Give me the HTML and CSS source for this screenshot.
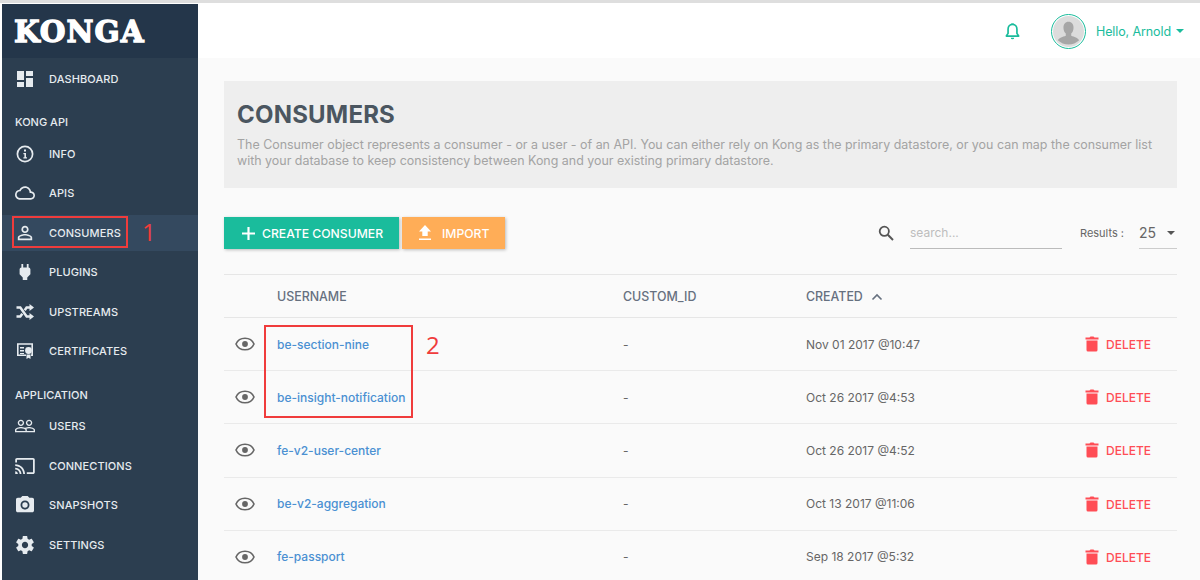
FILE: index.html
```html
<!DOCTYPE html>
<html lang="en">
<head>
<meta charset="utf-8">
<title>Konga - Consumers</title>
<link rel="stylesheet" href="styles.css">
</head>
<body>
<div class="app">
  <aside class="sidebar">
    <div class="brand">KONGA</div>
    <nav class="nav">
      <a class="item first"><svg class="ico" viewBox="0 0 18 18"><path d="M1 1h7v9H1zM10 1h7v5h-7zM10 8h7v9h-7zM1 12h7v5H1z" fill="currentColor"/></svg><span>DASHBOARD</span></a>
      <div class="group">KONG API</div>
      <a class="item"><svg class="ico" viewBox="0 0 18 18"><circle cx="9" cy="9" r="7.6" fill="none" stroke="currentColor" stroke-width="1.7"/><path d="M8 4.500h2v2H8zM7.400 8h2.600v4.200h1v1.300H7.400v-1.300h1V9.300h-1z" fill="currentColor"/></svg><span>INFO</span></a>
      <a class="item"><svg class="ico wide" viewBox="0 3 24 18"><path fill="currentColor" d="M19.350 10.040C18.670 6.590 15.640 4 12 4 9.110 4 6.600 5.640 5.350 8.040 2.340 8.360 0 10.910 0 14c0 3.310 2.690 6 6 6h13c2.760 0 5-2.240 5-5 0-2.640-2.050-4.780-4.650-4.960zM19 18H6c-2.210 0-4-1.790-4-4s1.790-4 4-4h.71C7.370 7.690 9.480 6 12 6c3.040 0 5.500 2.460 5.500 5.500v.5H19c1.660 0 3 1.340 3 3s-1.340 3-3 3z"/></svg><span>APIS</span></a>
      <a class="item active"><svg class="ico" viewBox="2 2 20 20"><path fill="currentColor" d="M12 5.900c1.160 0 2.100.94 2.100 2.100s-.94 2.100-2.100 2.100S9.900 9.160 9.900 8s.94-2.100 2.100-2.100m0 9c2.970 0 6.100 1.460 6.100 2.100v1.100H5.900V17c0-.64 3.130-2.100 6.100-2.100M12 4C9.790 4 8 5.790 8 8s1.790 4 4 4 4-1.790 4-4-1.790-4-4-4zm0 9c-2.670 0-8 1.340-8 4v3h16v-3c0-2.660-5.330-4-8-4z"/></svg><span>CONSUMERS</span></a>
      <a class="item"><svg class="ico" viewBox="3 2 18 20"><path fill="currentColor" d="M16.010 7L16 3h-2v4h-4V3H8v4h-.01C7 6.990 6 7.990 6 8.990v5.490L9.500 18v3h5v-3l3.500-3.510v-5.500c0-1-1-2-1.990-1.990z"/></svg><span>PLUGINS</span></a>
      <a class="item"><svg class="ico" viewBox="0 0 18 18"><path d="M.5 4.500h3.800l6.400 9H14M.5 13.500h3.800l2-2.800M8.700 7.300l1.900-2.800H14" fill="none" stroke="currentColor" stroke-width="2.500"/><path d="M13.500 1L18 4.500 13.500 8zM13.500 10L18 13.500 13.500 17z" fill="currentColor"/></svg><span>UPSTREAMS</span></a>
      <a class="item"><svg class="ico" viewBox="0 0 18 18"><path d="M10 13.200H1.800V2h14.400v11.200H15" fill="none" stroke="currentColor" stroke-width="1.600"/><path d="M4 5h4v1.500H4zM4 8h4v1.500H4zM4 11h4v1H4zM10.500 12.500h4V17l-2-1.200-2 1.200z" fill="currentColor"/><circle cx="12.500" cy="8.500" r="3.400" fill="currentColor"/></svg><span>CERTIFICATES</span></a>
      <div class="group">APPLICATION</div>
      <a class="item"><svg class="ico wide" viewBox="1 4 22 16"><path fill="currentColor" d="M16.500 13c-1.200 0-3.070.34-4.500 1-1.430-.67-3.300-1-4.500-1C5.330 13 1 14.080 1 16.250V19h22v-2.750c0-2.170-4.330-3.250-6.500-3.250zm-4 4.500h-10v-1.250c0-.54 2.560-1.750 5-1.750s5 1.210 5 1.750v1.250zm9 0H14v-1.250c0-.46-.2-.86-.52-1.220.88-.3 1.960-.53 3.020-.53 2.440 0 5 1.210 5 1.750v1.250zM7.500 12c1.930 0 3.500-1.570 3.500-3.500S9.430 5 7.500 5 4 6.570 4 8.500 5.570 12 7.500 12zm0-5.500c1.100 0 2 .9 2 2s-.9 2-2 2-2-.9-2-2 .9-2 2-2zm9 5.500c1.930 0 3.500-1.570 3.500-3.500S18.430 5 16.500 5 13 6.570 13 8.500s1.570 3.500 3.500 3.500zm0-5.500c1.100 0 2 .9 2 2s-.9 2-2 2-2-.9-2-2 .9-2 2-2z"/></svg><span>USERS</span></a>
      <a class="item"><svg class="ico wide" viewBox="1 3 22 18"><path fill="currentColor" d="M21 3H3c-1.100 0-2 .9-2 2v3h2V5h18v14h-7v2h7c1.100 0 2-.9 2-2V5c0-1.100-.9-2-2-2zM1 18v3h3c0-1.660-1.340-3-3-3zm0-4v2c2.760 0 5 2.240 5 5h2c0-3.870-3.130-7-7-7zm0-4v2c4.970 0 9 4.030 9 9h2c0-6.080-4.930-11-11-11z"/></svg><span>CONNECTIONS</span></a>
      <a class="item"><svg class="ico" viewBox="2 2 20 20"><path fill="currentColor" d="M9 2L7.170 4H4c-1.100 0-2 .9-2 2v12c0 1.100.9 2 2 2h16c1.100 0 2-.9 2-2V6c0-1.100-.9-2-2-2h-3.170L15 2H9zm3 15c-2.760 0-5-2.240-5-5s2.240-5 5-5 5 2.240 5 5-2.240 5-5 5z"/><circle cx="12" cy="12" r="3" fill="currentColor"/></svg><span>SNAPSHOTS</span></a>
      <a class="item"><svg class="ico" viewBox="2 2 20 20"><path fill="currentColor" d="M19.430 12.980c.04-.32.07-.64.07-.98s-.03-.66-.07-.98l2.110-1.650c.19-.15.24-.42.120-.64l-2-3.460c-.12-.22-.39-.3-.61-.22l-2.490 1c-.52-.4-1.080-.73-1.690-.98l-.38-2.650C14.460 2.180 14.250 2 14 2h-4c-.25 0-.46.18-.49.420l-.38 2.650c-.61.25-1.170.59-1.690.98l-2.490-1c-.23-.09-.49 0-.61.22l-2 3.460c-.13.22-.07.49.12.64l2.110 1.650c-.04.32-.07.65-.07.98s.03.66.07.98l-2.110 1.650c-.19.15-.24.42-.12.640l2 3.460c.12.22.39.3.61.22l2.490-1c.52.4 1.080.73 1.690.98l.38 2.650c.03.24.24.42.49.42h4c.25 0 .46-.18.49-.42l.38-2.650c.61-.25 1.170-.59 1.690-.98l2.490 1c.23.09.49 0 .61-.22l2-3.460c.12-.22.07-.49-.12-.64l-2.110-1.650zM12 15.500c-1.930 0-3.500-1.570-3.500-3.500s1.570-3.500 3.500-3.500 3.500 1.570 3.500 3.500-1.570 3.500-3.500 3.500z"/></svg><span>SETTINGS</span></a>
    </nav>
  </aside>
  <div class="main">
    <header class="topbar">
      <svg class="bell" viewBox="0 0 18 20"><path d="M9 2.500c-3 0-4.700 2.200-4.700 5.200v4.300L2.500 14.800h13L13.700 12V7.700C13.700 4.700 12 2.500 9 2.500z" fill="none" stroke="currentColor" stroke-width="1.800" stroke-linejoin="round"/><path d="M7.500 1.500h3v1.500h-3zM7.200 16.500h3.600a1.800 1.800 0 0 1-3.600 0z" fill="currentColor"/></svg>
      <div class="avatar"><svg viewBox="0 0 32 32"><circle cx="16" cy="16" r="16" fill="#dcdcdc"/><path d="M16 6c3.400 0 5.200 2.600 5.200 6 0 2.600-1 4.800-2.400 6v2.300c3 1.100 7 2.300 8.200 4.700a16 16 0 0 1-22 0c1.200-2.400 5.200-3.600 8.200-4.700V18c-1.400-1.200-2.400-3.400-2.400-6 0-3.400 1.800-6 5.200-6z" fill="#a6a6a6"/></svg></div>
      <span class="hello">Hello, Arnold</span><i class="caret green"></i>
    </header>
    <main class="content">
      <section class="intro">
        <h1>CONSUMERS</h1>
        <p>The Consumer object represents a consumer - or a user - of an API. You can either rely on Kong as the primary datastore, or you can map the consumer list with your database to keep consistency between Kong and your existing primary datastore.</p>
      </section>
      <div class="toolbar">
        <button class="btn teal"><svg class="plus" viewBox="0 0 12 12"><path d="M5 0h2v5h5v2H7v5H5V7H0V5h5z" fill="currentColor"/></svg>CREATE CONSUMER</button>
        <button class="btn orange"><svg class="up" viewBox="0 0 14 16"><path d="M7 0l6 6.500H9.700V11H4.300V6.500H1zM1 13.500h12V15H1z" fill="currentColor"/></svg>IMPORT</button>
        <div class="spacer"></div>
        <svg class="search" viewBox="0 0 16 16"><circle cx="6.300" cy="6.300" r="4.600" fill="none" stroke="currentColor" stroke-width="1.800"/><path d="M9.800 9.800L15 15" stroke="currentColor" stroke-width="2"/></svg>
        <div class="searchbox">search...</div>
        <span class="results">Results :</span>
        <div class="select"><span>25</span><i class="caret grey"></i></div>
      </div>
      <table class="grid">
        <thead><tr><th class="c-eye"></th><th class="c-user">USERNAME</th><th class="c-id">CUSTOM_ID</th><th class="c-date">CREATED <svg class="chev" viewBox="0 0 12 8"><path d="M1.500 6.500L6 2l4.500 4.500" fill="none" stroke="currentColor" stroke-width="1.600"/></svg></th><th></th></tr></thead>
        <tbody>
          <tr><td class="eye"><svg viewBox="0 0 20 14"><path d="M10 1.200C5.800 1.200 2.400 3.700 1 7c1.400 3.300 4.800 5.800 9 5.800s7.600-2.500 9-5.800c-1.400-3.300-4.800-5.800-9-5.800z" fill="none" stroke="currentColor" stroke-width="1.600"/><circle cx="10" cy="7" r="2.900" fill="currentColor"/></svg></td><td><a>be-section-nine</a></td><td>-</td><td>Nov 01 2017 @10:47</td><td class="del"><svg viewBox="0 0 14 16"><path d="M4.500 1.500L5.500.5h3l1 1H13.500v2H.5v-2zM1.500 4.500h11V14a1.500 1.500 0 0 1-1.500 1.500H3A1.500 1.500 0 0 1 1.500 14z" fill="currentColor"/></svg>DELETE</td></tr>
          <tr><td class="eye"><svg viewBox="0 0 20 14"><path d="M10 1.200C5.800 1.200 2.400 3.700 1 7c1.400 3.300 4.800 5.800 9 5.800s7.600-2.500 9-5.800c-1.400-3.300-4.800-5.800-9-5.800z" fill="none" stroke="currentColor" stroke-width="1.600"/><circle cx="10" cy="7" r="2.900" fill="currentColor"/></svg></td><td><a>be-insight-notification</a></td><td>-</td><td>Oct 26 2017 @4:53</td><td class="del"><svg viewBox="0 0 14 16"><path d="M4.500 1.500L5.500.5h3l1 1H13.500v2H.5v-2zM1.500 4.500h11V14a1.500 1.500 0 0 1-1.500 1.500H3A1.500 1.500 0 0 1 1.500 14z" fill="currentColor"/></svg>DELETE</td></tr>
          <tr><td class="eye"><svg viewBox="0 0 20 14"><path d="M10 1.200C5.800 1.200 2.400 3.700 1 7c1.400 3.300 4.800 5.800 9 5.800s7.600-2.500 9-5.800c-1.400-3.300-4.800-5.800-9-5.800z" fill="none" stroke="currentColor" stroke-width="1.600"/><circle cx="10" cy="7" r="2.900" fill="currentColor"/></svg></td><td><a>fe-v2-user-center</a></td><td>-</td><td>Oct 26 2017 @4:52</td><td class="del"><svg viewBox="0 0 14 16"><path d="M4.500 1.500L5.500.5h3l1 1H13.500v2H.5v-2zM1.500 4.500h11V14a1.500 1.500 0 0 1-1.500 1.500H3A1.500 1.500 0 0 1 1.500 14z" fill="currentColor"/></svg>DELETE</td></tr>
          <tr><td class="eye"><svg viewBox="0 0 20 14"><path d="M10 1.200C5.800 1.200 2.400 3.700 1 7c1.400 3.300 4.800 5.800 9 5.800s7.600-2.500 9-5.800c-1.400-3.300-4.800-5.800-9-5.800z" fill="none" stroke="currentColor" stroke-width="1.600"/><circle cx="10" cy="7" r="2.900" fill="currentColor"/></svg></td><td><a>be-v2-aggregation</a></td><td>-</td><td>Oct 13 2017 @11:06</td><td class="del"><svg viewBox="0 0 14 16"><path d="M4.500 1.500L5.500.5h3l1 1H13.500v2H.5v-2zM1.500 4.500h11V14a1.500 1.500 0 0 1-1.500 1.500H3A1.500 1.500 0 0 1 1.500 14z" fill="currentColor"/></svg>DELETE</td></tr>
          <tr><td class="eye"><svg viewBox="0 0 20 14"><path d="M10 1.200C5.800 1.200 2.400 3.700 1 7c1.400 3.300 4.800 5.800 9 5.800s7.600-2.500 9-5.800c-1.400-3.300-4.800-5.800-9-5.800z" fill="none" stroke="currentColor" stroke-width="1.600"/><circle cx="10" cy="7" r="2.900" fill="currentColor"/></svg></td><td><a>fe-passport</a></td><td>-</td><td>Sep 18 2017 @5:32</td><td class="del"><svg viewBox="0 0 14 16"><path d="M4.500 1.500L5.500.5h3l1 1H13.500v2H.5v-2zM1.500 4.500h11V14a1.500 1.500 0 0 1-1.500 1.500H3A1.500 1.500 0 0 1 1.500 14z" fill="currentColor"/></svg>DELETE</td></tr>
        </tbody>
      </table>
    </main>
  </div>
</div>
<div class="mark box-one"></div>
<div class="num num-one">1</div>
<div class="mark box-two"></div>
<div class="num num-two">2</div>
</body>
</html>
```
FILE: styles.css
```css
* { box-sizing: border-box; }
html, body { margin: 0; height: 580px; overflow: hidden; }
body { position: relative; background: #fafafa; font-family: Inter, "Liberation Sans", sans-serif; color: #555; }
.app { display: flex; height: 580px; border-top: 3px solid #dedede; padding-top: 1px; background: #fff; }
.sidebar { width: 196px; flex: none; margin-left: 2px; background: #2c3e50; color: #e6ebef; }
.brand { height: 54px; background: #24364a; color: #fff; font-family: "DejaVu Serif", serif; font-weight: 700; font-size: 29.500px; line-height: 56px; padding-left: 12px; -webkit-text-stroke: 1.300px #fff; letter-spacing: 1px; }
.nav { display: flex; flex-direction: column; }
.item { display: flex; align-items: center; height: 39.400px; padding-left: 14px; font-size: 11px; font-weight: 500; letter-spacing: .1px; }
.item.first { margin-top: 1px; }
.item span { margin-left: 15px; }
.item.active { background: #34495f; height: 36px; margin: 2px 0 1.400px; }
.ico { width: 18px; height: 18px; flex: none; }
.ico.wide { width: 20px; height: 16px; margin: 0 -1px; }
.group { height: 33px; padding-left: 13px; padding-top: 12px; font-size: 11px; font-weight: 500; margin-top: 6px; line-height: 13px; margin-bottom: -3px; }
.main { flex: 1; display: flex; flex-direction: column; min-width: 0; background: #fafafa; }
.topbar { height: 54px; flex: none; background: #fff; display: flex; align-items: center; justify-content: flex-end; padding-right: 16px; color: #1abc9c; }
.bell { width: 17px; height: 19px; margin-right: 30px; }
.avatar { width: 35px; height: 35px; border: 1px solid #1abc9c; border-radius: 50%; padding: 1px; margin-right: 10px; }
.avatar svg { display: block; width: 100%; height: 100%; }
.hello { font-size: 12.500px; letter-spacing: -.1px; }
.caret { display: block; width: 0; height: 0; border: 4px solid transparent; border-bottom-width: 0; margin-left: 5px; }
.caret.green { border-top-color: #1abc9c; }
.caret.grey { border-top-color: #555; }
.content { padding: 23px 23px 0 26px; }
.intro { height: 107px; background: #eeeeee; padding: 19px 13px 0; }
.intro h1 { margin: 0; font-size: 24px; line-height: 30px; font-weight: 700; color: #4b5660; letter-spacing: .2px; }
.intro p { margin: 7px 0 0; font-size: 12.450px; line-height: 16px; color: #a3a3a3; }
.toolbar { display: flex; align-items: center; height: 32px; margin-top: 29px; }
.btn { display: flex; align-items: center; height: 32px; border: 0; font-family: inherit; font-size: 12.200px; font-weight: 500; color: #fff; box-shadow: 1px 1px 3px rgba(0,0,0,.25); padding: 0; }
.teal { width: 175px; background: #1abc9c; padding-left: 18px; margin-right: 3px; }
.plus { width: 13px; height: 13px; margin-right: 7px; }
.orange { width: 103px; background: #ffad57; padding-left: 16px; }
.up { width: 14px; height: 16px; margin-right: 10px; }
.spacer { flex: 1; }
.search { width: 16px; height: 16px; color: #555; margin-right: 16px; }
.searchbox { width: 152px; height: 32px; line-height: 31px; border-bottom: 1px solid #bbb; font-size: 12px; color: #bdbdbd; margin-right: 18px; }
.results { font-size: 11px; color: #666; margin-right: 15px; }
.select { width: 38px; height: 32px; display: flex; align-items: center; justify-content: space-between; border-bottom: 1px solid #ccc; font-size: 14px; color: #666; padding-right: 1px; }
.select .caret { margin-right: 1px; }
.grid { width: 100%; margin-top: 25px; border-collapse: collapse; table-layout: fixed; border-top: 1px solid #e6e6e6; }
.grid th { height: 43px; text-align: left; font-size: 12.400px; font-weight: 500; color: #66707f; border-bottom: 1px solid #e6e6e6; padding: 0; }
.grid td { height: 53.200px; font-size: 12px; color: #666; border-bottom: 1px solid #eaeaea; padding: 0; }
.c-eye { width: 53px; }
.c-user { width: 346px; }
.c-id { width: 183px; }
.c-date { width: 279px; }
.chev { width: 12px; height: 8px; margin-left: 5px; }
.grid a { color: #4a90d2; font-weight: 500; }
.eye { color: #555; padding-left: 11px !important; }
.eye svg { display: block; width: 20px; height: 14px; }
.grid td.del { color: #ff4d55; font-weight: 500; white-space: nowrap; }
.del svg { width: 14px; height: 16px; vertical-align: -3px; margin-right: 7px; }
.mark { position: absolute; border: 2px solid #f03c3c; }
.box-one { left: 12px; top: 216px; width: 116px; height: 32px; }
.box-two { left: 264px; top: 325px; width: 149px; height: 93px; }
.num { position: absolute; color: #f03c3c; font-size: 24px; line-height: 28px; font-family: "Open Sans", sans-serif; }
.num-one { left: 142px; top: 218px; }
.num-two { left: 426px; top: 331px; }
```
